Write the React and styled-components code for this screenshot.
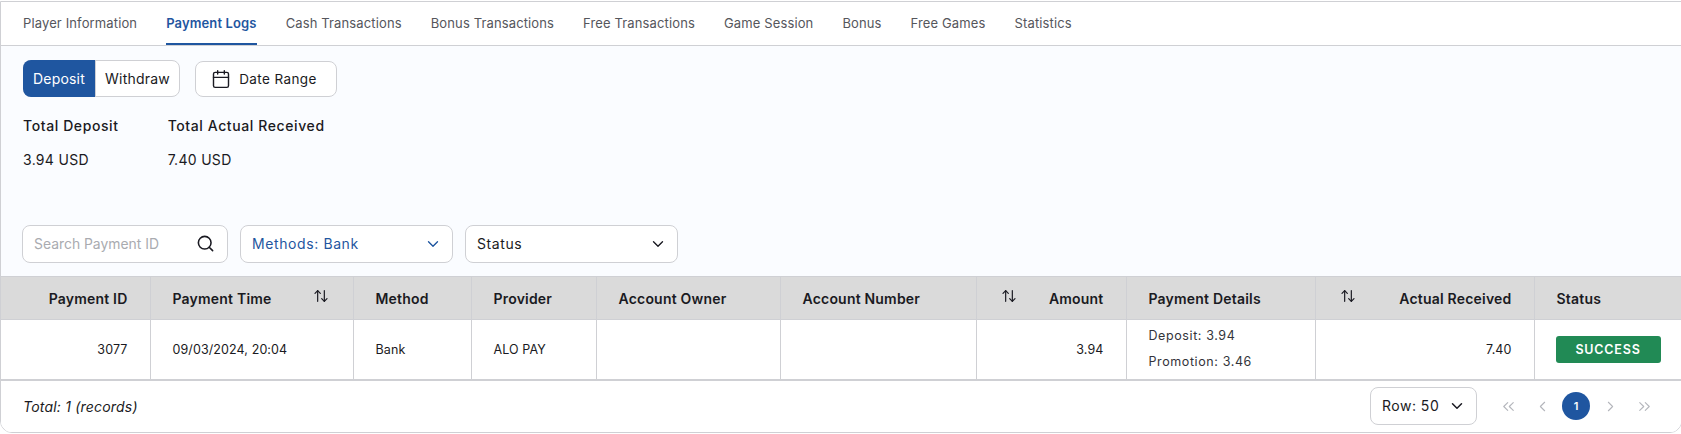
import React from 'react';
import styled, { createGlobalStyle } from 'styled-components';
import { ArrowUpDown, Calendar, ChevronDown, ChevronLeft, ChevronRight, ChevronsLeft, ChevronsRight, Search } from 'lucide-react';

const GlobalStyle = createGlobalStyle`
  html, body {
    overflow: hidden;
  }
  body {
    margin: 0;
    padding-top: 1px;
    background: #fff;
    font-family: Inter, "Liberation Sans", sans-serif;
    color: #1a1a22;
  }
`;

const Card = styled.div`
  width: 1682px;
  height: 432px;
  box-sizing: border-box;
  border: 1px solid #cfd0d4;
  border-radius: 0 0 12px 12px;
  display: flex;
  flex-direction: column;
  overflow: hidden;
`;

const TabBar = styled.nav`
  height: 44px;
  box-sizing: border-box;
  flex: none;
  display: flex;
  gap: 29px;
  padding-left: 22px;
  background: #fff;
  border-bottom: 1px solid #cfd0d4;
`;

const Tab = styled.a`
  height: 43px;
  box-sizing: border-box;
  display: flex;
  align-items: center;
  font-size: 13px;
  letter-spacing: 0.13px;
  font-weight: ${p => (p.$active ? 600 : 400)};
  color: ${p => (p.$active ? '#1f56a0' : '#55565c')};
  border-bottom: 2px solid ${p => (p.$active ? '#1f56a0' : 'transparent')};
`;

const Body = styled.div`
  flex: 1;
  background: #fafcff;
  display: flex;
  flex-direction: column;
`;

const Toolbar = styled.div`
  display: flex;
  align-items: center;
  gap: 15px;
  padding: 14px 0 0 22px;
`;

const Segments = styled.div`
  display: flex;
  height: 37px;
  width: 157px;
  box-sizing: border-box;
  border: 1px solid #cfd0d4;
  border-radius: 8px;
  background: #fff;
`;

const Segment = styled.button`
  border: 0;
  margin: ${p => (p.$active ? '-1px 0 -1px -1px' : '0')};
  padding: 0;
  flex: ${p => (p.$active ? '0 0 73px' : '1')};
  font: 400 14px Inter, sans-serif;
  letter-spacing: 0.2px;
  border-radius: ${p => (p.$active ? '8px 0 0 8px' : '0 8px 8px 0')};
  background: ${p => (p.$active ? '#1f56a0' : 'transparent')};
  color: ${p => (p.$active ? '#fff' : '#1a1a22')};
  border-right: ${p => (p.$active ? '1px solid #cfd0d4' : '0')};
`;

const RangeButton = styled.button`
  width: 142px;
  height: 36px;
  box-sizing: border-box;
  display: flex;
  align-items: center;
  justify-content: center;
  gap: 8px;
  padding: 0 4px 0 0;
  border: 1px solid #cfd0d4;
  border-radius: 8px;
  background: #fff;
  color: #1a1a22;
  font: 400 13.5px Inter, sans-serif;
  letter-spacing: 0.4px;
`;

const Totals = styled.div`
  display: flex;
  gap: 49px;
  padding: 21px 0 0 22px;
`;

const Total = styled.div`
  display: flex;
  flex-direction: column;
  gap: 18px;
`;

const TotalLabel = styled.div`
  font-size: 14px;
  line-height: 16px;
  font-weight: 500;
  letter-spacing: 0.6px;
`;

const TotalValue = styled.div`
  font-size: 14px;
  line-height: 16px;
  letter-spacing: 0.3px;
`;

const Filters = styled.div`
  display: flex;
  gap: 12px;
  padding: 57px 0 0 21px;
`;

const Field = styled.div`
  width: ${p => p.$width}px;
  height: 38px;
  box-sizing: border-box;
  display: flex;
  align-items: center;
  justify-content: space-between;
  padding: 0 10px 1px 11px;
  border: 1px solid #cfd0d4;
  border-radius: 8px;
  background: #fff;
  font-size: 14px;
  letter-spacing: 0.6px;
  color: ${p => p.$color || '#1a1a22'};
`;

const Placeholder = styled.span`
  font-size: 13.9px;
  letter-spacing: 0;
  color: #a9abb0;
`;

const SearchIcon = styled(Search)`
  margin-right: 2px;
`;

const Table = styled.table`
  width: 1680px;
  table-layout: fixed;
  border-collapse: collapse;
  margin-top: 13px;
  background: #fff;
  border-bottom: 2px solid #cfd0d4;
`;

const HeadCell = styled.th`
  height: 43px;
  padding: 0 22px;
  box-sizing: border-box;
  background: #dadada;
  border: 1px solid #cfd0d4;
  border-left: ${p => (p.$first ? 0 : '1px solid #cfd0d4')};
  font-size: 14px;
  letter-spacing: 0.2px;
  font-weight: 600;
  color: #1a1a22;
  text-align: ${p => p.$align || 'left'};
`;

const HeadInner = styled.div`
  display: flex;
  align-items: center;
  justify-content: space-between;
`;

const SortIcon = styled(ArrowUpDown).attrs({ size: 16, strokeWidth: 1.8 })`
  margin: -4px 2px 0;
`;

const Cell = styled.td`
  height: 60px;
  padding: 0 22px;
  box-sizing: border-box;
  border-left: ${p => (p.$first ? 0 : '1px solid #cfd0d4')};
  border-right: 1px solid #cfd0d4;
  font-size: 12.5px;
  letter-spacing: 0.1px;
  text-align: ${p => p.$align || 'left'};
`;

const DetailLine = styled.div`
  line-height: 16px;
  letter-spacing: 0.6px;
  color: #33343a;
  & + & {
    margin-top: 10px;
  }
`;

const Badge = styled.div`
  width: 105px;
  height: 27px;
  display: flex;
  align-items: center;
  justify-content: center;
  margin-left: -1px;
  border-radius: 3px;
  background: #218a55;
  color: #fff;
  font-size: 12.5px;
  font-weight: 600;
  letter-spacing: 0.8px;
`;

const Footer = styled.div`
  flex: 1;
  background: #fff;
  display: flex;
  align-items: center;
  justify-content: space-between;
  padding: 0 20px 0 22px;
`;

const TotalRecords = styled.em`
  font-size: 14px;
  letter-spacing: 0.2px;
`;

const Pagination = styled.div`
  display: flex;
  align-items: center;
`;

const RowSelect = styled.div`
  width: 107px;
  height: 38px;
  box-sizing: border-box;
  display: flex;
  align-items: center;
  justify-content: space-between;
  padding: 0 10px 1px 11px;
  margin-right: 14px;
  border: 1px solid #cfd0d4;
  border-radius: 8px;
  font-size: 14px;
  letter-spacing: 0.5px;
`;

const PageArrow = styled.span`
  width: 34px;
  display: flex;
  justify-content: center;
  color: #b4b6bc;
`;

const PageNumber = styled.span`
  width: 28px;
  height: 28px;
  margin: 0 3px;
  border-radius: 50%;
  display: flex;
  align-items: center;
  justify-content: center;
  background: #1f56a0;
  color: #fff;
  font-size: 11px;
  font-weight: 600;
`;

const tabs = ['Player Information', 'Payment Logs', 'Cash Transactions', 'Bonus Transactions', 'Free Transactions', 'Game Session', 'Bonus', 'Free Games', 'Statistics'];

const widths = [149, 203, 118, 125, 184, 196, 150, 189, 219, 147];

export default function App() {
  return (
    <>
      <GlobalStyle />
      <Card>
        <TabBar>
          {tabs.map(t => (
            <Tab key={t} $active={t === 'Payment Logs'}>{t}</Tab>
          ))}
        </TabBar>
        <Body>
          <Toolbar>
            <Segments>
              <Segment $active>Deposit</Segment>
              <Segment>Withdraw</Segment>
            </Segments>
            <RangeButton>
              <Calendar size={20} strokeWidth={1.7} />
              Date Range
            </RangeButton>
          </Toolbar>
          <Totals>
            <Total>
              <TotalLabel>Total Deposit</TotalLabel>
              <TotalValue>3.94 USD</TotalValue>
            </Total>
            <Total>
              <TotalLabel>Total Actual Received</TotalLabel>
              <TotalValue>7.40 USD</TotalValue>
            </Total>
          </Totals>
          <Filters>
            <Field $width={206}>
              <Placeholder>Search Payment ID</Placeholder>
              <SearchIcon size={19} strokeWidth={2} color="#1a1a22" />
            </Field>
            <Field $width={213} $color="#1f56a0">
              Methods: Bank
              <ChevronDown size={18} strokeWidth={1.8} />
            </Field>
            <Field $width={213}>
              Status
              <ChevronDown size={18} strokeWidth={1.8} />
            </Field>
          </Filters>
          <Table>
            <colgroup>
              {widths.map((w, i) => <col key={i} width={w} />)}
            </colgroup>
            <thead>
              <tr>
                <HeadCell $first $align="right">Payment ID</HeadCell>
                <HeadCell><HeadInner>Payment Time <SortIcon /></HeadInner></HeadCell>
                <HeadCell>Method</HeadCell>
                <HeadCell>Provider</HeadCell>
                <HeadCell>Account Owner</HeadCell>
                <HeadCell>Account Number</HeadCell>
                <HeadCell><HeadInner><SortIcon /> Amount</HeadInner></HeadCell>
                <HeadCell>Payment Details</HeadCell>
                <HeadCell><HeadInner><SortIcon /> Actual Received</HeadInner></HeadCell>
                <HeadCell>Status</HeadCell>
              </tr>
            </thead>
            <tbody>
              <tr>
                <Cell $first $align="right">3077</Cell>
                <Cell>09/03/2024, 20:04</Cell>
                <Cell>Bank</Cell>
                <Cell>ALO PAY</Cell>
                <Cell />
                <Cell />
                <Cell $align="right">3.94</Cell>
                <Cell>
                  <DetailLine>Deposit: 3.94</DetailLine>
                  <DetailLine>Promotion: 3.46</DetailLine>
                </Cell>
                <Cell $align="right">7.40</Cell>
                <Cell><Badge>SUCCESS</Badge></Cell>
              </tr>
            </tbody>
          </Table>
          <Footer>
            <TotalRecords>Total: 1 (records)</TotalRecords>
            <Pagination>
              <RowSelect>
                Row: 50
                <ChevronDown size={18} strokeWidth={2} />
              </RowSelect>
              <PageArrow><ChevronsLeft size={19} strokeWidth={1.4} /></PageArrow>
              <PageArrow><ChevronLeft size={17} strokeWidth={1.5} /></PageArrow>
              <PageNumber>1</PageNumber>
              <PageArrow><ChevronRight size={17} strokeWidth={1.5} /></PageArrow>
              <PageArrow><ChevronsRight size={19} strokeWidth={1.4} /></PageArrow>
            </Pagination>
          </Footer>
        </Body>
      </Card>
    </>
  );
}
